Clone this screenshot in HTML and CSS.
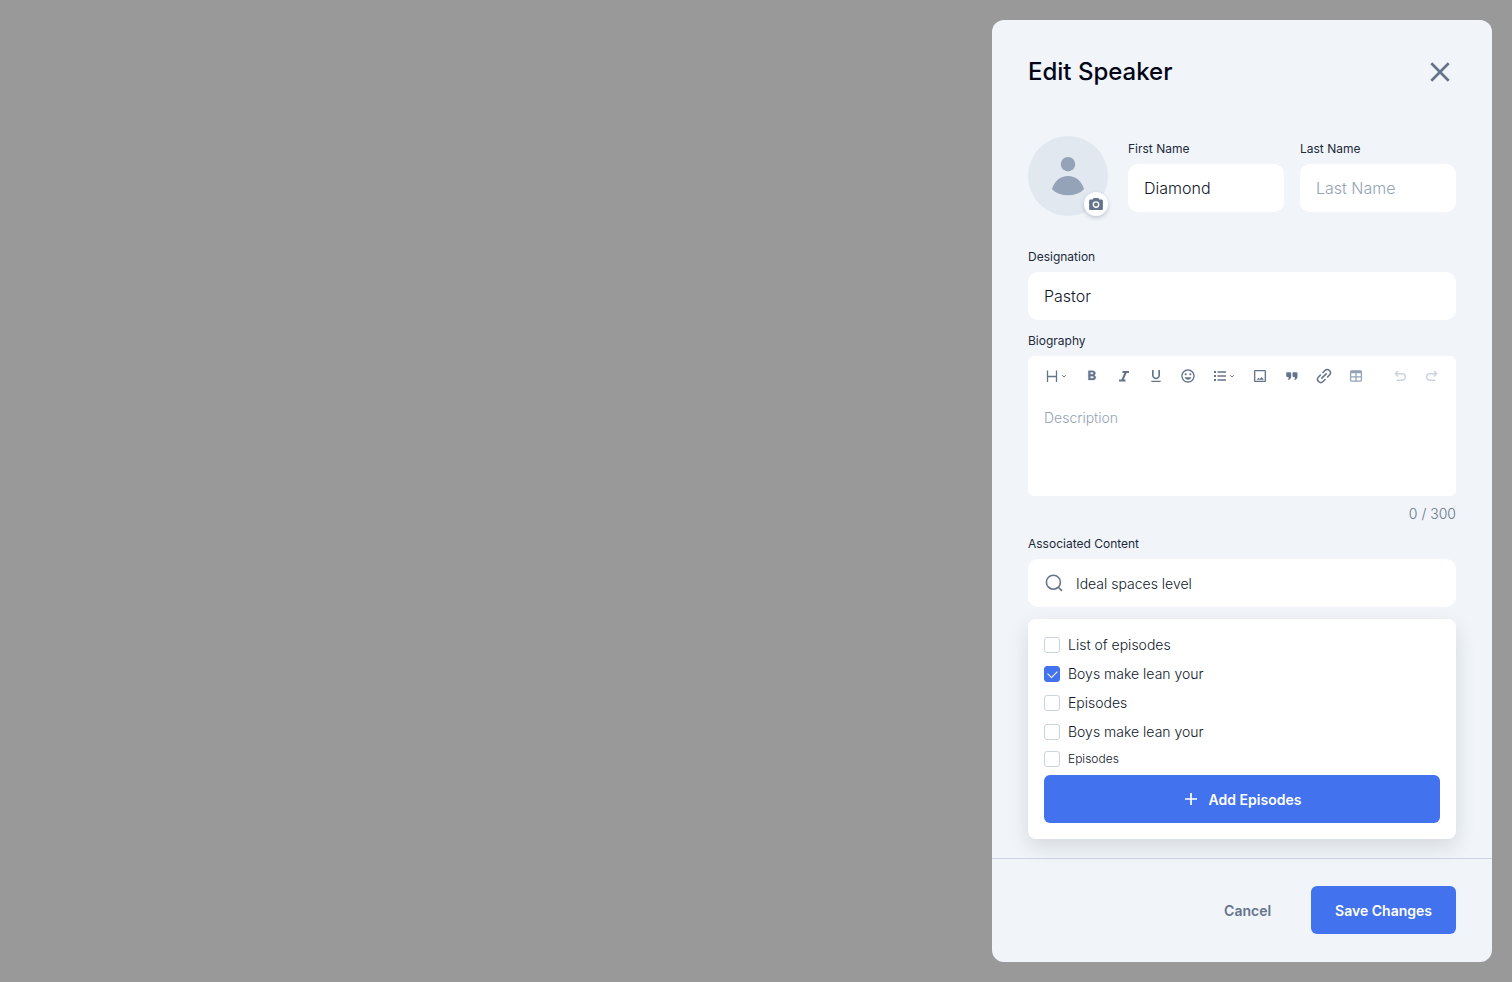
FILE: index.html
```html
<!DOCTYPE html>
<html lang="en">
<head>
<meta charset="utf-8">
<meta name="viewport" content="width=device-width, initial-scale=1">
<title>Edit Speaker</title>
<link rel="stylesheet" href="styles.css">
</head>
<body>
<form class="panel">
    <header class="panel-header">
        <h1 class="panel-title">Edit Speaker</h1>
        <button type="button" class="close-button" aria-label="Close">
            <svg width="32" height="32" viewBox="0 0 32 32" fill="none" stroke="currentColor" stroke-width="2.700"><path d="M7.300 7.300l17.400 17.400M24.700 7.300L7.300 24.700"/></svg>
        </button>
    </header>

    <div class="panel-body">
        <div class="profile-row">
            <div class="avatar">
                <svg class="avatar-icon" width="80" height="80" viewBox="0 0 80 80" fill="currentColor">
                    <circle cx="40" cy="28.200" r="7.200"/>
                    <path d="M24 53.200C26.200 45.200 32.300 40 40 40s13.800 5.200 16 13.200C51.800 57.200 46.500 59.300 40 59.300S28.200 57.200 24 53.200z"/>
                </svg>
                <button type="button" class="camera-button" aria-label="Change photo">
                    <svg width="16" height="16" viewBox="0 0 16 16">
                        <path fill="currentColor" d="M5.600 2h4.800l1 1.400h2.200c.7 0 1.300.6 1.300 1.300v8c0 .7-.6 1.300-1.300 1.300H2.400c-.7 0-1.300-.6-1.300-1.300v-8c0-.7.6-1.300 1.300-1.300h2.200z"/>
                        <circle cx="8" cy="8.600" r="2.700" fill="none" stroke="#fff" stroke-width="1.400"/>
                    </svg>
                </button>
            </div>
            <div class="field">
                <label class="label" for="first-name">First Name</label>
                <input class="input" type="text" id="first-name" value="Diamond">
            </div>
            <div class="field">
                <label class="label" for="last-name">Last Name</label>
                <input class="input" type="text" id="last-name" placeholder="Last Name">
            </div>
        </div>

        <div class="field">
            <label class="label" for="designation">Designation</label>
            <input class="input" type="text" id="designation" value="Pastor">
        </div>

        <div class="field">
            <label class="label" for="biography">Biography</label>
            <div class="editor">
                <div class="toolbar">
                    <button type="button" class="tool tool-menu" aria-label="Heading">
                        <svg width="16" height="16" viewBox="0 0 16 16" fill="none" stroke="currentColor" stroke-width="1.300"><path d="M3.500 2.500v11.500M12.500 2.500v11.500M3.500 8.500h9"/></svg>
                        <svg width="8" height="16" viewBox="0 0 8 16" fill="none" stroke="currentColor"><path d="M2.200 7.200L4 9l1.800-1.800"/></svg>
                    </button>
                    <button type="button" class="tool" aria-label="Bold">
                        <svg width="16" height="16" viewBox="0 0 24 24" fill="currentColor" stroke="currentColor" stroke-width=".4"><path d="M15.600 10.790c.97-.67 1.650-1.770 1.650-2.790 0-2.260-1.750-4-4-4H6.500v14h7.540c2.090 0 3.710-1.700 3.710-3.790 0-1.520-.86-2.820-2.150-3.420zM9.500 6.500h3c.83 0 1.500.67 1.500 1.500s-.67 1.500-1.500 1.500h-3v-3zm3.500 9H9.500v-3H13c.83 0 1.500.67 1.500 1.500s-.67 1.500-1.500 1.500z"/></svg>
                    </button>
                    <button type="button" class="tool" aria-label="Italic">
                        <svg width="16" height="16" viewBox="0 0 16 16" fill="none" stroke="currentColor" stroke-width="2"><path d="M6.500 4H13M3 12.500h6.500M9.900 4L6.200 12.500"/></svg>
                    </button>
                    <button type="button" class="tool" aria-label="Underline">
                        <svg width="16" height="16" viewBox="0 0 24 24" fill="currentColor"><path d="M12 17c3.310 0 6-2.690 6-6V3h-2.500v8c0 1.930-1.570 3.500-3.500 3.500S8.500 12.930 8.500 11V3H6v8c0 3.310 2.690 6 6 6zm-7 2v2h14v-2H5z"/></svg>
                    </button>
                    <button type="button" class="tool" aria-label="Emoji">
                        <svg width="16" height="16" viewBox="0 0 24 24" fill="currentColor"><path d="M11.990 2C6.470 2 2 6.480 2 12s4.470 10 9.990 10C17.520 22 22 17.520 22 12S17.520 2 11.990 2zM12 20c-4.420 0-8-3.580-8-8s3.580-8 8-8 8 3.580 8 8-3.580 8-8 8zm3.500-9c.83 0 1.500-.67 1.500-1.500S16.330 8 15.500 8 14 8.670 14 9.500s.67 1.500 1.500 1.500zm-7 0c.83 0 1.500-.67 1.500-1.500S9.330 8 8.500 8 7 8.670 7 9.500 7.670 11 8.500 11zm3.500 6.500c2.330 0 4.310-1.460 5.110-3.500H6.890c.8 2.040 2.780 3.500 5.110 3.500z"/></svg>
                    </button>
                    <button type="button" class="tool tool-menu" aria-label="List">
                        <svg width="16" height="16" viewBox="0 0 16 16" fill="currentColor"><path d="M2 3h2v2H2zM2 7h2v2H2zM2 11h2v2H2zM5.500 3.200H14v1.500H5.500zM5.500 7.200H14v1.500H5.500zM5.500 11.200H14v1.500H5.500z"/></svg>
                        <svg width="8" height="16" viewBox="0 0 8 16" fill="none" stroke="currentColor"><path d="M2.200 7.200L4 9l1.800-1.800"/></svg>
                    </button>
                    <button type="button" class="tool" aria-label="Image">
                        <svg width="16" height="16" viewBox="0 0 24 24" fill="currentColor"><path d="M19 5v14H5V5h14m0-2H5c-1.100 0-2 .9-2 2v14c0 1.100.9 2 2 2h14c1.100 0 2-.9 2-2V5c0-1.100-.9-2-2-2zm-4.500 10.500l-2.600 3.100-2.200-1.800L7 17.500h11l-3.500-4z"/></svg>
                    </button>
                    <button type="button" class="tool" aria-label="Quote">
                        <svg width="16" height="16" viewBox="0 0 16 16" fill="currentColor"><path d="M3 4.200h3a1.200 1.200 0 0 1 1.200 1.200v3c0 1.600-.8 2.800-2.200 3.400H3.600c.7-.8 1.100-1.500 1.200-2.600H3.600A1.400 1.400 0 0 1 2.200 7.800V5a.8.8 0 0 1 .8-.8zM9.300 4.200h3a1.200 1.200 0 0 1 1.200 1.200v3c0 1.600-.8 2.800-2.200 3.400H9.900c.7-.8 1.100-1.500 1.200-2.600H9.900a1.400 1.400 0 0 1-1.400-1.400V5a.8.8 0 0 1 .8-.8z"/></svg>
                    </button>
                    <button type="button" class="tool" aria-label="Link">
                        <svg width="16" height="16" viewBox="0 0 24 24" fill="none" stroke="currentColor" stroke-width="2.300" stroke-linecap="round"><path d="M8.800 15.200l6.400-6.400M10.500 6.700l2.900-2.900a4.800 4.800 0 0 1 6.800 6.800l-2.900 2.900M13.500 17.300l-2.900 2.900a4.800 4.800 0 0 1-6.800-6.800l2.900-2.900"/></svg>
                    </button>
                    <button type="button" class="tool tool-muted" aria-label="Table">
                        <svg width="16" height="16" viewBox="0 0 16 16" fill="none" stroke="currentColor" stroke-width="1.300"><rect x="2.600" y="3" width="10.800" height="10.200" rx="1"/><path d="M2.600 4h10.800" stroke-width="2.600"/><path d="M2.600 8.900h10.800M8 5v8"/></svg>
                    </button>
                    <button type="button" class="tool tool-undo" aria-label="Undo" disabled>
                        <svg width="16" height="16" viewBox="0 0 16 16" fill="none" stroke="currentColor" stroke-width="1.500"><path d="M6 3L3.300 5.700 6 8.400M3.500 5.700h6.600a3.200 3.200 0 0 1 0 6.600H5"/></svg>
                    </button>
                    <button type="button" class="tool" aria-label="Redo" disabled>
                        <svg width="16" height="16" viewBox="0 0 16 16" fill="none" stroke="currentColor" stroke-width="1.500"><path d="M10 3l2.700 2.700L10 8.400M12.500 5.700H5.900a3.200 3.200 0 0 0 0 6.600H11"/></svg>
                    </button>
                </div>
                <textarea class="editor-text" id="biography" maxlength="300" placeholder="Description"></textarea>
            </div>
            <div class="counter">0 / 300</div>
        </div>

        <div class="field">
            <label class="label" for="content-search">Associated Content</label>
            <div class="search">
                <svg class="search-icon" width="20" height="20" viewBox="0 0 20 20" fill="none" stroke="currentColor" stroke-width="1.600"><circle cx="9.400" cy="9.200" r="7"/><path d="M14.300 14.200l3.700 3.700"/></svg>
                <input class="search-input" type="text" id="content-search" value="Ideal spaces level">
            </div>
        </div>

        <div class="results">
            <div class="options">
                <label class="option"><input class="checkbox" type="checkbox">List of episodes</label>
                <label class="option"><input class="checkbox" type="checkbox" checked>Boys make lean your</label>
                <label class="option"><input class="checkbox" type="checkbox">Episodes</label>
                <label class="option"><input class="checkbox" type="checkbox">Boys make lean your</label>
                <label class="option option-small"><input class="checkbox" type="checkbox">Episodes</label>
            </div>
            <button type="button" class="button add-button">
                <svg width="16" height="16" viewBox="0 0 16 16" fill="none" stroke="currentColor" stroke-width="1.700"><path d="M8 2v12M2 8h12"/></svg>
                Add Episodes
            </button>
        </div>
    </div>

    <footer class="panel-footer">
        <button type="button" class="button cancel-button">Cancel</button>
        <button type="submit" class="button">Save Changes</button>
    </footer>
</form>
</body>
</html>
```

FILE: styles.css
```css
* {
    box-sizing: border-box;
}

body {
    display: flex;
    justify-content: flex-end;
    min-height: 100vh;
    margin: 0;
    padding: 20px;
    background: #999;
    color: #0f172a;
    font-family: Inter, "Liberation Sans", sans-serif;
    font-size: 14px;
    font-weight: 300;
    line-height: 20px;
}

button,
input,
textarea {
    font-family: inherit;
    font-weight: inherit;
    color: inherit;
}

button {
    padding: 0;
    border: none;
    background: none;
    cursor: pointer;
}

svg {
    display: block;
    flex-shrink: 0;
}

.panel {
    display: flex;
    flex-direction: column;
    width: 100%;
    max-width: 500px;
    border-radius: 12px;
    background: #f1f5f9;
    overflow: hidden;
}

.panel-header {
    display: flex;
    justify-content: space-between;
    align-items: center;
    padding: 36px 36px 48px;
}

.panel-title {
    margin: 0;
    color: #020617;
    font-size: 24px;
    font-weight: 500;
    line-height: 32px;
}

.close-button {
    color: #64748b;
}

.panel-body {
    display: flex;
    flex-direction: column;
    gap: 12px;
    flex: 1;
    padding: 0 36px 19px;
}

.profile-row {
    display: flex;
    align-items: center;
    gap: 16px;
    margin-bottom: 20px;
}

.profile-row .field {
    flex: 1;
    min-width: 0;
}

.avatar {
    position: relative;
    flex-shrink: 0;
    width: 80px;
    height: 80px;
    margin-right: 4px;
    border-radius: 50%;
    background: #e2e8f0;
}

.avatar-icon {
    color: #94a3b8;
}

.camera-button {
    position: absolute;
    right: 0;
    bottom: 0;
    display: flex;
    align-items: center;
    justify-content: center;
    width: 24px;
    height: 24px;
    border-radius: 50%;
    background: #fff;
    color: #64748b;
    box-shadow: 0 2px 4px rgba(100, 116, 139, 0.35);
}

.field {
    display: flex;
    flex-direction: column;
    gap: 6px;
}

.label {
    color: #1e293b;
    font-size: 12px;
    font-weight: 400;
    line-height: 18px;
}

.input {
    width: 100%;
    height: 48px;
    padding: 0 16px;
    border: none;
    border-radius: 10px;
    background: #fff;
    font-size: 16px;
}

::placeholder {
    color: #94a3b8;
    opacity: 1;
}

.editor {
    border-radius: 6px;
    background: #fff;
    overflow: hidden;
}

.toolbar {
    display: flex;
    align-items: center;
    gap: 16px;
    padding: 12px 16px;
}

.tool {
    color: #64748b;
}

.tool-menu {
    display: flex;
}

.tool-muted {
    color: #94a3b8;
}

.tool:disabled {
    color: #cbd5e1;
}

.tool-undo {
    margin-left: auto;
}

.editor-text {
    display: block;
    width: 100%;
    height: 100px;
    padding: 12px 16px;
    border: none;
    background: none;
    font-size: 14px;
    line-height: 20px;
    resize: none;
}

.counter {
    padding-top: 3px;
    color: #64748b;
    line-height: 18px;
    text-align: right;
}

.search {
    display: flex;
    align-items: center;
    gap: 12px;
    height: 48px;
    padding: 0 16px;
    border-radius: 10px;
    background: #fff;
}

.search-icon {
    color: #64748b;
}

.search-input {
    flex: 1;
    min-width: 0;
    padding: 0;
    border: none;
    background: none;
    font-size: 14px;
}

.results {
    display: flex;
    flex-direction: column;
    gap: 8px;
    padding: 16px;
    border-radius: 8px;
    background: #fff;
    box-shadow: 0 8px 20px rgba(15, 23, 42, 0.12);
}

.options {
    display: flex;
    flex-direction: column;
    gap: 9px;
}

.option {
    display: flex;
    align-items: center;
    gap: 8px;
}

.option-small {
    font-size: 12px;
    line-height: 16px;
}

.checkbox {
    appearance: none;
    width: 16px;
    height: 16px;
    margin: 0;
    border: 1px solid #cbd5e1;
    border-radius: 3px;
    background: #fff;
}

.checkbox:checked {
    display: flex;
    justify-content: center;
    border-color: #4272ed;
    background: #4272ed;
}

/* tick */
.checkbox:checked::before {
    content: "";
    width: 8px;
    height: 5px;
    margin-top: 3px;
    border: solid #fff;
    border-width: 0 0 1px 1px;
    transform: rotate(-45deg);
}

.button {
    display: flex;
    align-items: center;
    justify-content: center;
    height: 48px;
    padding: 0 24px;
    border-radius: 6px;
    background: #4272ed;
    color: #fff;
    font-size: 14px;
    font-weight: 600;
}

.add-button {
    gap: 10px;
}

.panel-footer {
    display: flex;
    justify-content: flex-end;
    gap: 16px;
    padding: 27px 36px 28px;
    border-top: 1px solid #cbd5e1;
}

.cancel-button {
    background: none;
    color: #64748b;
}
```
